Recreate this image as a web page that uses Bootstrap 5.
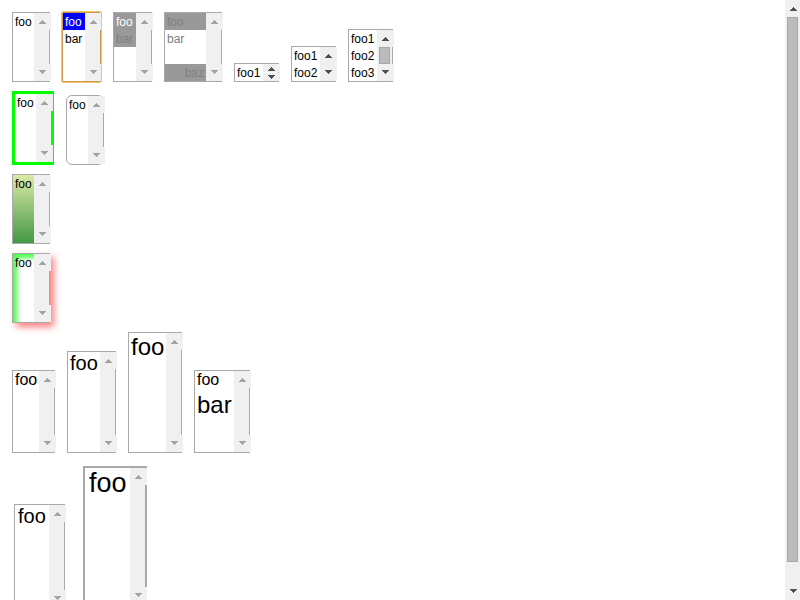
<!DOCTYPE html>
<html lang="en">
<head>
<meta charset="utf-8">
<meta name="viewport" content="width=device-width, initial-scale=1">
<title>Select list boxes</title>
<link rel="stylesheet" href="https://cdn.jsdelivr.net/npm/bootstrap@5.3.0/dist/css/bootstrap.min.css">
<style>
body { font: 12px "Liberation Sans", Arial, sans-serif; color: #000; background: #fff; }
.page-rows { padding: 12px; gap: 9px; }
.set { gap: 12px; }
.set-wide { gap: 18px; padding: 4px 2px 0; }
/* list box frame: options on the left, scroll bar on the right */
.lb { --edge: #a9a9a9; --line: 17px; --drop: 2px; --pad: 2px; border: 1px solid var(--edge); background: #fff; }
.lb select { appearance: none; border: 0; margin: 0; padding: 0; background: none; color: inherit; font: inherit; outline: 0; overflow: hidden; scrollbar-width: none; border-radius: 0; height: calc(var(--line) * var(--rows, 4) + var(--extra, 0px)); width: var(--list, 21px); }
.lb select::-webkit-scrollbar { display: none; }
.lb option { display: block; box-sizing: border-box; min-height: 0; height: var(--line); padding: var(--drop) var(--pad) 0; color: inherit; overflow: visible; }
.sbar { width: 15px; background: #f0f0f0; --arrow: #a3a3a3; }
.sbar.live { --arrow: #505050; }
.sbar button { width: 17px; height: 17px; border: 0; padding: 7px 0 0; background: #f0f0f0; display: flex; align-items: flex-start; justify-content: center; }
.sbar button:last-child { padding-top: 6px; }
.sbar svg { width: 7px; height: 4px; flex: none; fill: var(--arrow); shape-rendering: crispEdges; }
.thumb { background: #bbb; border: 1px solid #a8a8a8; margin: 0 2px; width: 11px; }
.sbar.short { background: #fff; }
.sbar.short button { height: 8px; padding-top: 3px; }
.sbar.short button:last-child { padding-top: 2px; }
.one-row { --rows: 1; --list: 28px; }
.two-rows { --rows: 2; --list: 28px; }
.three-rows { --rows: 3; --list: 28px; }
.w-bar { --list: 22px; }
.focused { --edge: #cf9a45; outline: 1px solid #f0c36e; border-radius: 1px; }
.picked { background: #00f; color: #fff !important; }
.gray-picked { background: #999; color: #fff !important; }
.gray-off { background: #999; color: #808080 !important; }
.off { --list: 41px; color: #808080; }
.thick { --edge: #0f0; border-width: 3px; }
.round { border-radius: 6px; }
.grad { background: linear-gradient(#dceaa5, #429846); }
.glow { box-shadow: 4px 4px 7px #ff8080, inset 4px 4px 5px #4f4; }
.f16 { font-size: 16px; --line: 20px; --drop: 0px; --list: 26px; --extra: 1px; }
.f20 { font-size: 20px; --line: 25px; --drop: 0px; --list: 32px; }
.f24 { font-size: 24px; --line: 30px; --drop: 0px; --list: 37px; --extra: -1px; }
.mixed { --list: 39px; }
.mixed .large { font-size: 24px; height: 30px; }
.zoom-a { font-size: 20px; --line: 25px; --drop: 0px; --list: 34px; --pad: 3px; --extra: 2px; }
.zoom-b { font-size: 27px; --line: 34px; --drop: 0px; --list: 45px; --pad: 4px; border-width: 2px; margin-bottom: 2px; }
.viewbar { width: 15px; flex: none; }
.viewbar button { width: 15px; padding-left: 2px; }
.viewbar .thumb { flex: 1 1 0; margin-bottom: 21px; }
</style>
<script src="https://cdn.jsdelivr.net/npm/bootstrap@5.3.0/dist/js/bootstrap.bundle.min.js"></script>
</head>
<body>
<svg class="d-none"><symbol id="up" viewBox="0 0 7 4"><path d="M3 0h1v1h1v1h1v1h1v1H0V3h1V2h1V1h1z"/></symbol><symbol id="down" viewBox="0 0 7 4"><path d="M0 0h7v1H6v1H5v1H4v1H3V3H2V2H1V1H0z"/></symbol></svg>
<div class="d-flex vh-100 overflow-hidden">
<main class="page-rows d-flex flex-column flex-grow-1">
<div class="set d-flex align-items-end">
<div class="lb d-flex"><select multiple aria-label="Basic"><option>foo</option></select></div>
<div class="lb d-flex w-bar focused"><select multiple aria-label="Focused"><option class="picked">foo</option><option>bar</option></select></div>
<div class="lb d-flex w-bar"><select multiple aria-label="Inactive selection"><option class="gray-picked">foo</option><option class="gray-off">bar</option></select></div>
<div class="lb d-flex off"><select multiple aria-label="Disabled"><option class="gray-off">foo</option><option>bar</option><option></option><option class="gray-off text-end">baz</option></select></div>
<div class="lb d-flex one-row" data-bar="short live"><select multiple aria-label="One row"><option>foo1</option></select></div>
<div class="lb d-flex two-rows" data-bar="live"><select multiple aria-label="Two rows"><option>foo1</option><option>foo2</option></select></div>
<div class="lb d-flex three-rows" data-bar="live" data-thumb><select multiple aria-label="Three rows"><option>foo1</option><option>foo2</option><option>foo3</option></select></div>
</div>
<div class="set d-flex align-items-end">
<div class="lb d-flex thick"><select multiple aria-label="Thick border"><option>foo</option></select></div>
<div class="lb d-flex round"><select multiple aria-label="Rounded border"><option>foo</option></select></div>
</div>
<div class="set d-flex align-items-end">
<div class="lb d-flex grad"><select multiple aria-label="Gradient"><option>foo</option></select></div>
</div>
<div class="set d-flex align-items-end">
<div class="lb d-flex glow"><select multiple aria-label="Shadow"><option>foo</option></select></div>
</div>
<div class="set d-flex align-items-end">
<div class="lb d-flex f16"><select multiple aria-label="Medium text"><option>foo</option></select></div>
<div class="lb d-flex f20"><select multiple aria-label="Large text"><option>foo</option></select></div>
<div class="lb d-flex f24"><select multiple aria-label="Larger text"><option>foo</option></select></div>
<div class="lb d-flex f16 mixed"><select multiple aria-label="Mixed text"><option>foo</option><option class="large">bar</option></select></div>
</div>
<div class="set set-wide d-flex align-items-end">
<div class="lb d-flex zoom-a"><select multiple aria-label="Zoomed"><option>foo</option></select></div>
<div class="lb d-flex zoom-b"><select multiple aria-label="Zoomed more"><option>foo</option></select></div>
</div>
</main>
<div class="viewbar sbar live d-flex flex-column" id="viewbar"></div>
</div>
<script>
const arrow = (dir) => `<button type="button" aria-label="Scroll ${dir}"><svg><use href="#${dir}"/></svg></button>`;
document.querySelectorAll('.lb').forEach((box) => {
  const thumb = 'thumb' in box.dataset ? '<span class="thumb flex-grow-1"></span>' : '';
  box.insertAdjacentHTML('beforeend', `<div class="sbar d-flex flex-column justify-content-between ${box.dataset.bar || ''}">${arrow('up')}${thumb}${arrow('down')}</div>`);
});
document.getElementById('viewbar').innerHTML = arrow('up') + '<span class="thumb"></span>' + arrow('down');
</script>
</body>
</html>
